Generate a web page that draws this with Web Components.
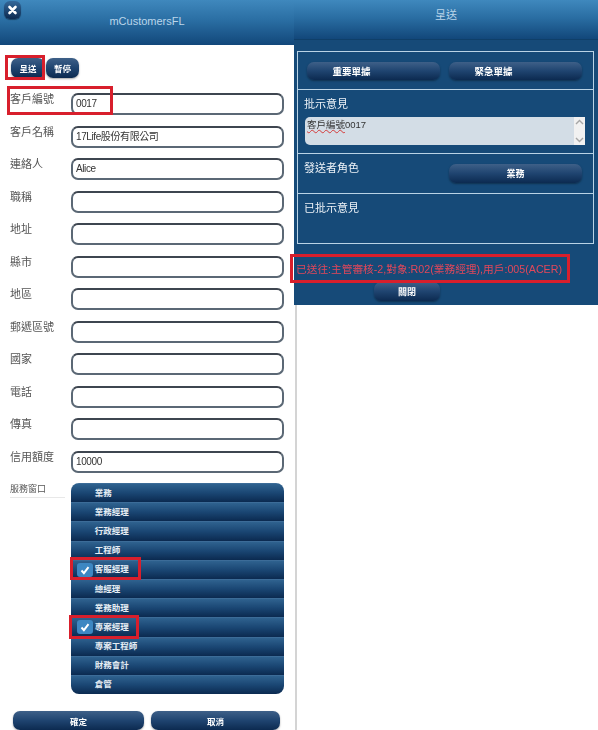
<!DOCTYPE html>
<html>
<head>
<meta charset="utf-8">
<title>mCustomersFL</title>
<style>
    html, body { margin: 0; padding: 0; background: #fff; }
    body { font-family: "Liberation Sans", "Noto Sans CJK TC", sans-serif; }
</style>
</head>
<body>
<app-page>
    <form-panel slot="left">
        <bar-header height="45" pad="3">
            <close-button slot="start"></close-button>
            mCustomersFL
        </bar-header>
        <form-body>
            <tool-row>
                <nav-button width="34" height="20">呈送</nav-button>
                <nav-button width="33" height="20">暫停</nav-button>
            </tool-row>
            <field-list>
                <text-field label="客戶編號" value="0017"></text-field>
                <text-field label="客戶名稱" value="17Life股份有限公司"></text-field>
                <text-field label="連絡人" value="Alice"></text-field>
                <text-field label="職稱"></text-field>
                <text-field label="地址"></text-field>
                <text-field label="縣市"></text-field>
                <text-field label="地區"></text-field>
                <text-field label="郵遞區號"></text-field>
                <text-field label="國家"></text-field>
                <text-field label="電話"></text-field>
                <text-field label="傳真"></text-field>
                <text-field label="信用額度" value="10000"></text-field>
            </field-list>
            <check-group label="服務窗口">
                <check-item>業務</check-item>
                <check-item>業務經理</check-item>
                <check-item>行政經理</check-item>
                <check-item>工程師</check-item>
                <check-item checked>客服經理</check-item>
                <check-item>總經理</check-item>
                <check-item>業務助理</check-item>
                <check-item checked>專案經理</check-item>
                <check-item>專案工程師</check-item>
                <check-item>財務會計</check-item>
                <check-item>倉管</check-item>
            </check-group>
            <foot-row>
                <nav-button width="131">確定</nav-button>
                <nav-button width="129">取消</nav-button>
            </foot-row>
        </form-body>
    </form-panel>
    <send-panel slot="right">
        <bar-header height="40" pad="12" class="dark-edge">呈送</bar-header>
        <grid-table>
            <table-row height="37" class="buttons">
                <nav-button width="133" height="18" shift="22" size="9.5">重要單據</nav-button>
                <nav-button width="133" height="18" shift="22" size="9.5">緊急單據</nav-button>
            </table-row>
            <table-row height="63">
                <strong-label>批示意見</strong-label>
                <memo-box>客戶編號0017</memo-box>
            </table-row>
            <table-row height="39" class="role">
                <strong-label>發送者角色</strong-label>
                <nav-button width="133" height="19" size="9">業務</nav-button>
            </table-row>
            <table-row height="49">
                <strong-label>已批示意見</strong-label>
            </table-row>
        </grid-table>
        <status-line>已送往:主管審核-2,對象:R02(業務經理),用戶:005(ACER)</status-line>
        <close-row><nav-button width="66" height="19" size="9">關閉</nav-button></close-row>
    </send-panel>
    <red-mark x="5" y="55" w="40" h="25"></red-mark>
    <red-mark x="7" y="86" w="106" h="29"></red-mark>
    <red-mark x="70" y="557" w="71" h="23"></red-mark>
    <red-mark x="69" y="615" w="70" h="24"></red-mark>
    <red-mark x="290" y="254" w="280" h="29"></red-mark>
</app-page>

<template id="app-page">
    <style>
        :host { display: grid; grid-template-columns: 294px 304px; width: 598px; height: 730px; overflow: hidden; position: relative; filter: blur(0.35px); }
    </style>
    <slot name="left"></slot>
    <slot name="right"></slot>
    <slot></slot>
</template>

<template id="bar-header">
    <style>
        :host { display: flex; align-items: center; justify-content: center; position: relative; box-sizing: border-box;
            background: linear-gradient(#3f88bd, #2a6ea3 45%, #12477a); color: #bcd6ea; font-size: 11px; }
        :host(.dark-edge) { border-bottom: 1px solid #0f3f69; }
        ::slotted([slot=start]) { position: absolute; left: 4px; top: 1px; }
    </style>
    <slot name="start"></slot>
    <slot></slot>
</template>

<template id="close-button">
    <style>
        :host { display: block; width: 17px; height: 18px; border-radius: 6px; background: linear-gradient(#33689a, #0c2a50); box-shadow: 0 1px 1px rgba(0,0,0,.4); }
        svg { display: block; width: 17px; height: 18px; }
    </style>
    <svg viewBox="0 0 17 18"><path d="M5.5 6l6 6M11.5 6l-6 6" stroke="#fff" stroke-width="2.6" stroke-linecap="round" fill="none"/></svg>
</template>

<template id="nav-button">
    <style>
        :host { display: inline-flex; align-items: center; justify-content: center; box-sizing: border-box; height: 19px; border-radius: 7px;
            background: linear-gradient(#3e6088, #1f4470 50%, #0c2a50); color: #fff; font-size: 8.5px; font-weight: bold;
            box-shadow: 0 1px 2px rgba(0,0,0,.35); }
    </style>
    <slot></slot>
</template>

<template id="form-panel">
    <style>:host { display: block; background: #fff; }</style>
    <slot></slot>
</template>

<template id="form-body">
    <style>:host { display: block; padding: 13px 10px 0 10px; }</style>
    <slot></slot>
</template>

<template id="tool-row">
    <style>:host { display: flex; gap: 1px; padding-left: 1px; height: 35px; align-items: flex-start; }</style>
    <slot></slot>
</template>

<template id="field-list">
    <style>:host { display: flex; flex-direction: column; gap: 10.55px; }</style>
    <slot></slot>
</template>

<template id="text-field">
    <style>
        :host { display: flex; height: 22px; color: #555; font-size: 11px; }
        .label { width: 61px; flex: none; line-height: 16px; margin-top: -2px; }
        .input { box-sizing: border-box; width: 214px; height: 22px; border: 2px solid #5b6875; border-top-color: #3e4650; border-radius: 7px; background: #fff;
            color: #333; font-size: 10px; letter-spacing: -0.4px; line-height: 18px; padding-left: 3px; }
    </style>
    <div class="label"></div>
    <div class="input"></div>
</template>

<template id="check-group">
    <style>
        :host { display: flex; margin-top: 10px; color: #555; font-size: 9px; }
        .label { box-sizing: border-box; width: 55px; margin-right: 6px; height: 15px; line-height: 13px; border-bottom: 1px solid #e8e8e8; }
        .list { width: 214px; border-radius: 8px; overflow: hidden; }
    </style>
    <div class="label"></div>
    <div class="list"><slot></slot></div>
</template>

<template id="check-item">
    <style>
        :host { display: flex; align-items: center; box-sizing: border-box; height: 19.2px; padding: 0 0 3px 24px; position: relative;
            background: linear-gradient(#2f628f, #1a4673 50%, #0b2a50); color: #e6edf4; font-size: 8.5px; font-weight: bold; border-top: 1px solid #3c6c98; }
        .box { display: none; position: absolute; left: 6px; top: 2px; width: 16px; height: 14px; border-radius: 3px; background: #3d87c2; }
        :host([checked]) .box { display: block; }
        svg { display: block; width: 16px; height: 14px; }
    </style>
    <div class="box"><svg viewBox="0 0 16 14"><path d="M4.5 7.5l2.4 2.6L11.5 4.2" stroke="#fff" stroke-width="2" fill="none"/></svg></div>
    <slot></slot>
</template>

<template id="foot-row">
    <style>:host { display: flex; gap: 7px; padding-left: 3px; margin-top: 17px; }</style>
    <slot></slot>
</template>

<template id="send-panel">
    <style>
        :host { display: block; height: 730px; color: #e6eef5; }
        .top { height: 305px; background: #164a78; }
        .rest { height: 425px; margin-left: 1px; border-left: 2px solid #d4d4d4; }
    </style>
    <div class="top"><slot></slot></div>
    <div class="rest"></div>
</template>

<template id="grid-table">
    <style>:host { display: block; width: 297px; margin: 11px 0 0 3px; box-sizing: border-box; border: 1px solid #b9d3e6; }</style>
    <slot></slot>
</template>

<template id="table-row">
    <style>
        :host { display: block; border-bottom: 1px solid #b9d3e6; }
        :host(:last-child) { border-bottom: 0; }
        :host(.buttons) { display: flex; gap: 9px; align-items: center; padding-left: 9px; }
        :host(.role) { display: flex; justify-content: space-between; align-items: flex-start; padding-right: 11px; }
        :host(.role) ::slotted(nav-button) { margin-top: 10px; }
    </style>
    <slot></slot>
</template>

<template id="strong-label">
    <style>:host { display: block; padding: 6px 0 0 6px; font-size: 11px; line-height: 16px; color: #eef3f8; }</style>
    <slot></slot>
</template>

<template id="memo-box">
    <style>
        :host { display: flex; box-sizing: border-box; width: 280px; height: 28px; margin: 5px 0 0 7px; background: #d3dde6; border-radius: 5px 0 0 5px; color: #333; font-size: 9.5px; line-height: 14px; }
        .text { flex: 1; padding: 1px 0 0 2px; }
        u { text-decoration: underline wavy #d43a3a 1px; }
        .bar { width: 11px; background: #f1f1f1; display: flex; flex-direction: column; justify-content: space-between; }
        svg { display: block; width: 11px; height: 12px; }
    </style>
    <div class="text"><u>客戶編號</u>0017</div>
    <div class="bar">
        <svg viewBox="0 0 11 12"><path d="M2 7l3.5-3.5L9 7" stroke="#a6a6a6" stroke-width="1.4" fill="none"/></svg>
        <svg viewBox="0 0 11 12"><path d="M2 5l3.5 3.5L9 5" stroke="#a6a6a6" stroke-width="1.4" fill="none"/></svg>
    </div>
</template>

<template id="status-line">
    <style>:host { display: block; margin: 18px 0 0 2px; color: #e2475a; font-size: 10.7px; line-height: 15px; white-space: nowrap; }</style>
    <slot></slot>
</template>

<template id="close-row">
    <style>:host { display: flex; padding-left: 80px; margin-top: 5px; }</style>
    <slot></slot>
</template>

<template id="red-mark">
    <style>:host { position: absolute; box-sizing: border-box; border: 3px solid #d81f2c; pointer-events: none; }</style>
</template>

<script>
    // every element here just clones its own template into an open shadow root
    function fromTemplate(name) {
        return document.getElementById(name).content.cloneNode(true);
    }

    class Base extends HTMLElement {
        constructor() {
            super();
            this.attachShadow({ mode: "open" });
            this.shadowRoot.appendChild(fromTemplate(this.localName));
        }
    }

    class BarHeader extends Base {
        connectedCallback() {
            this.style.height = this.getAttribute("height") + "px";
            this.style.paddingBottom = this.getAttribute("pad") + "px";
        }
    }

    class NavButton extends Base {
        connectedCallback() {
            this.style.width = this.getAttribute("width") + "px";
            if (this.hasAttribute("height")) this.style.height = this.getAttribute("height") + "px";
            if (this.hasAttribute("shift")) this.style.paddingRight = (this.getAttribute("shift") * 2) + "px";
            if (this.hasAttribute("size")) this.style.fontSize = this.getAttribute("size") + "px";
        }
    }

    class TextField extends Base {
        connectedCallback() {
            this.shadowRoot.querySelector(".label").textContent = this.getAttribute("label");
            this.shadowRoot.querySelector(".input").textContent = this.getAttribute("value") || "";
        }
    }

    class CheckGroup extends Base {
        connectedCallback() {
            this.shadowRoot.querySelector(".label").textContent = this.getAttribute("label");
        }
    }

    class TableRow extends Base {
        connectedCallback() {
            this.style.height = this.getAttribute("height") + "px";
        }
    }

    class RedMark extends Base {
        connectedCallback() {
            this.style.left = this.getAttribute("x") + "px";
            this.style.top = this.getAttribute("y") + "px";
            this.style.width = this.getAttribute("w") + "px";
            this.style.height = this.getAttribute("h") + "px";
        }
    }

    const plain = ["app-page", "close-button", "form-panel", "form-body", "tool-row", "field-list", "check-item",
        "foot-row", "send-panel", "grid-table", "strong-label", "memo-box", "status-line", "close-row"];
    plain.forEach(name => customElements.define(name, class extends Base {}));

    customElements.define("bar-header", BarHeader);
    customElements.define("nav-button", NavButton);
    customElements.define("text-field", TextField);
    customElements.define("check-group", CheckGroup);
    customElements.define("table-row", TableRow);
    customElements.define("red-mark", RedMark);
</script>
</body>
</html>
